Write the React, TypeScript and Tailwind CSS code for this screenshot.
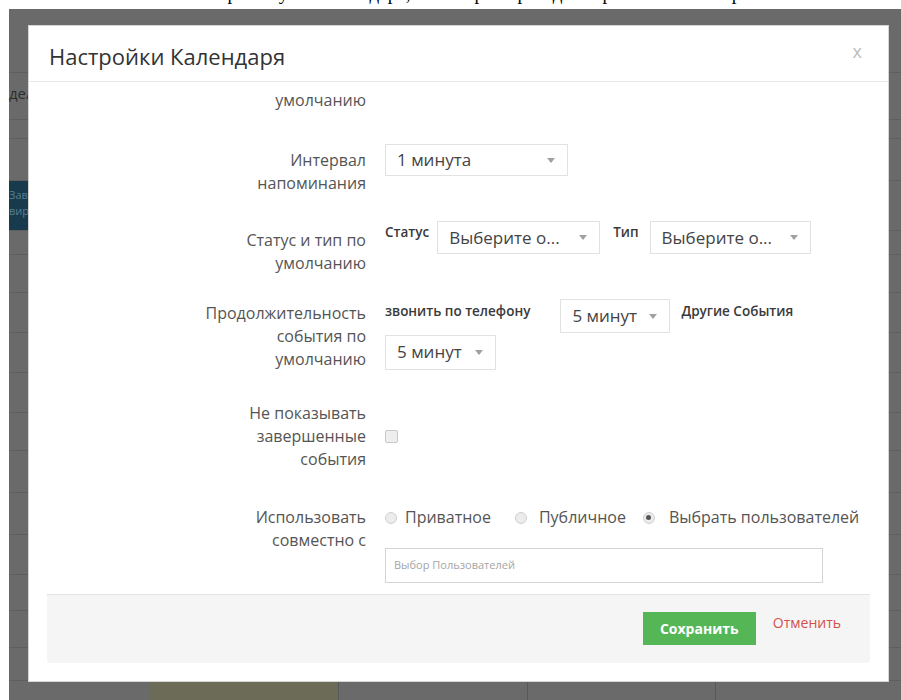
import React from 'react';

// rows of the page table that sits behind the dimmed overlay
const pageRows = [64, 47, 19, 42, 50, 24, 38, 40, 40, 40, 38, 42, 42, 40, 36, 37, 33];

const Caret = () => (
  <svg width="8" height="5" viewBox="0 0 8 5" className="shrink-0">
    <path d="M0 0h8L4 5z" fill="#a0a0a0" />
  </svg>
);

function Select({ value, className }: { value: string; className: string }) {
  return (
    <div
      className={`flex items-center justify-between border border-[#e2e2e2] bg-white pl-[11px] pr-[12px] text-[17px] font-normal text-[#444] ${className}`}
    >
      <span className="whitespace-nowrap">{value}</span>
      <Caret />
    </div>
  );
}

function Radio({ checked }: { checked?: boolean }) {
  return (
    <span className="flex h-[12px] w-[12px] shrink-0 items-center justify-center rounded-full border border-[#cfcfcf] bg-[#ececec]">
      {checked && <span className="h-[5px] w-[5px] rounded-full bg-[#555]" />}
    </span>
  );
}

function Label({ lines, className = '' }: { lines: string[]; className?: string }) {
  return (
    <div className={`w-[337px] shrink-0 text-right text-[16px] leading-[23px] text-[#555] ${className}`}>
      {lines.map((l) => (
        <div key={l}>{l}</div>
      ))}
    </div>
  );
}

export default function App() {
  return (
    <div className="relative h-[700px] w-[901px] overflow-hidden bg-white font-['Open_Sans',sans-serif]">
      {/* clipped text of the surrounding article */}
      <div className="h-[9px] overflow-hidden">
        <p className="-mt-[17px] whitespace-nowrap pl-[10px] font-['Liberation_Serif',serif] text-[19px] leading-[22px] text-black">
          В меню пользователя выберите пункт Календарь, затем при переходе откройте окно настроек
        </p>
      </div>

      <div className="ml-[9px] flex h-[691px] flex-col">
        <div className="h-[2px] bg-[#18293a]" />

        {/* dimmed page behind the dialog */}
        <div className="relative flex-1 bg-[#6a6a6a]">
          {pageRows.map((h, i) => (
            <div key={i} className="relative border-b border-[#5e5e5e]" style={{ height: h }}>
              {i === 1 && (
                <span className="absolute left-0 top-[10px] text-[15px] leading-[20px] text-[#2d2d2d]">де/</span>
              )}
              {i === 4 && (
                <div className="absolute left-0 top-0 h-full w-[19px] overflow-hidden bg-[#173a4c] text-[11px] leading-[16px] text-[#5b7d8e]">
                  <div className="mt-[6px]">Зав</div>
                  <div>вир</div>
                </div>
              )}
            </div>
          ))}
          <div className="flex h-[20px]">
            <div className="w-[141px]" />
            <div className="w-[188px] bg-[#6c6b57]" />
            <div className="w-[189px] border-l border-[#585858]" />
            <div className="w-[188px] border-l border-[#585858]" />
            <div className="flex-1 border-l border-[#585858]" />
          </div>
        </div>
      </div>

      {/* settings dialog */}
      <div className="absolute left-[28px] top-[25px] flex h-[657px] w-[861px] flex-col border border-[#d5d5d5] bg-white">
        <div className="flex h-[56px] shrink-0 items-center justify-between border-b border-[#e7e7e7] pl-[20px] pr-[26px] pt-[6px]">
          <h3 className="text-[22px] font-normal text-[#333]">Настройки Календаря</h3>
          <span className="-mt-[10px] text-[18px] text-[#bdbdbd]">x</span>
        </div>

        <div className="flex flex-1 flex-col">
          <div className="mt-[7px] flex">
            <Label lines={['умолчанию']} />
          </div>

          <div className="mt-[32px] flex">
            <Label lines={['Интервал', 'напоминания']} className="pt-[5px]" />
            <div className="ml-[19px]">
              <Select value="1 минута" className="h-[32px] w-[183px]" />
            </div>
          </div>

          <div className="mt-[26px] flex">
            <Label lines={['Статус и тип по', 'умолчанию']} className="pt-[8px]" />
            <div className="ml-[19px] flex items-start text-[13.5px] font-semibold leading-[20px] text-[#3a3a3a]">
              <span className="pt-[1px]">Статус</span>
              <Select value="Выберите о..." className="ml-[8px] h-[33px] w-[163px]" />
              <span className="ml-[13px] pt-[1px]">Тип</span>
              <Select value="Выберите о..." className="ml-[11px] h-[33px] w-[161px]" />
            </div>
          </div>

          <div className="mt-[24px] flex">
            <Label lines={['Продолжительность', 'события по', 'умолчанию']} className="pt-[3px]" />
            <div className="ml-[19px] flex w-[440px] flex-wrap items-start text-[13.5px] font-semibold leading-[20px] text-[#3a3a3a]">
              <span className="pt-[2px]">звонить по телефону</span>
              <Select value="5 минут" className="ml-[30px] h-[34px] w-[110px]" />
              <span className="ml-[11px] pt-[2px]">Другие События</span>
              <Select value="5 минут" className="h-[35px] w-[111px]" />
            </div>
          </div>

          <div className="mt-[31px] flex items-center">
            <Label lines={['Не показывать', 'завершенные', 'события']} />
            <span className="ml-[19px] h-[13px] w-[13px] rounded-[2px] border border-[#c8c8c8] bg-[#eeeeee]" />
          </div>

          <div className="mt-[35px] flex">
            <Label lines={['Использовать', 'совместно с']} />
            <div className="ml-[19px] flex flex-col">
              <div className="flex items-center text-[16px] leading-[23px] text-[#555]">
                <Radio />
                <span className="ml-[8px]">Приватное</span>
                <span className="ml-[24px]">
                  <Radio />
                </span>
                <span className="ml-[12px]">Публичное</span>
                <span className="ml-[17px]">
                  <Radio checked />
                </span>
                <span className="ml-[14px]">Выбрать пользователей</span>
              </div>
            </div>
          </div>

          <div className="ml-[356px] -mt-[4px] flex h-[35px] w-[438px] items-center border border-[#d4d4d4] px-[8px] text-[11px] text-[#a5a5a5]">
            Выбор Пользователей
          </div>

          <div className="mx-[18px] mt-[11px] flex h-[69px] items-start justify-end rounded-b-[3px] border-t border-[#e4e4e4] bg-[#f5f5f5] pr-[29px] pt-[17px]">
            <button className="h-[33px] w-[113px] bg-[#55b655] text-[14px] font-bold text-white">Сохранить</button>
            <span className="ml-[17px] mt-[1px] text-[14px] leading-[20px] text-[#d2504c]">Отменить</span>
          </div>
        </div>
      </div>
    </div>
  );
}
